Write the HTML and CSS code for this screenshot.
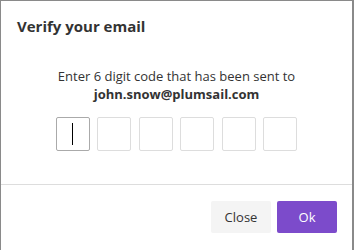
FILE: index.html
```html
<!DOCTYPE html>
<html lang="en">
<head>
    <meta charset="UTF-8">
    <meta name="viewport" content="width=device-width, initial-scale=1.0">
    <title>Verify your email</title>
    <link rel="stylesheet" href="styles.css">
</head>
<body>

    <div class="dialog">
        <div class="dialog-header">
            <h2>Verify your email</h2>
        </div>

        <div class="dialog-body">
            <div class="hint">Enter 6 digit code that has been sent to</div>
            <div class="hint email">john.snow@plumsail.com</div>

            <div class="code">
                <div class="digit active"><span class="caret"></span></div>
                <div class="digit"></div>
                <div class="digit"></div>
                <div class="digit"></div>
                <div class="digit"></div>
                <div class="digit"></div>
            </div>
        </div>

        <div class="dialog-footer">
            <button class="btn">Close</button>
            <button class="btn primary">Ok</button>
        </div>
    </div>

</body>
</html>
```

FILE: styles.css
```css
html, body{
    margin: 0;
    background: #fff;
}

body{
    font-family: "Open Sans", "Noto Sans", sans-serif;
    color: #333;
}

.dialog{
    width: 354px;
    height: 250px;
    box-sizing: border-box;
    border: 1px solid #8a8a8a;
    border-right-width: 2px;
    border-bottom: none;
    background: #fff;
}

.dialog-header{
    padding: 15px 16px 0;
}

h2{
    margin: 0;
    font-size: 15px;
    line-height: 20px;
    font-weight: 700;
    color: #333;
}

.dialog-body{
    padding-top: 31px;
    height: 116px;
    box-sizing: border-box;
}

.hint{
    text-align: center;
    font-size: 13px;
    line-height: 18px;
}

.hint.email{
    font-weight: 700;
}

.code{
    display: flex;
    justify-content: center;
    gap: 7.5px;
    margin-top: 14px;
}

.digit{
    width: 34px;
    height: 34px;
    box-sizing: border-box;
    border: 1px solid #ddd;
    border-radius: 2px;
    display: flex;
    align-items: center;
    justify-content: center;
}

.digit.active{
    border-color: #aaa;
}

.caret{
    width: 1px;
    height: 22px;
    background: #000;
}

.dialog-footer{
    margin-top: 32px;
    border-top: 1px solid #ddd;
    display: flex;
    justify-content: flex-end;
    gap: 6px;
    padding: 16px 15px 0;
}

.btn{
    width: 60px;
    height: 32px;
    border: none;
    border-radius: 2px;
    background: #f4f4f4;
    color: #333;
    font-family: inherit;
    font-size: 13px;
    cursor: pointer;
}

.btn.primary{
    background: #7c4bcb;
    color: #fff;
}
```
